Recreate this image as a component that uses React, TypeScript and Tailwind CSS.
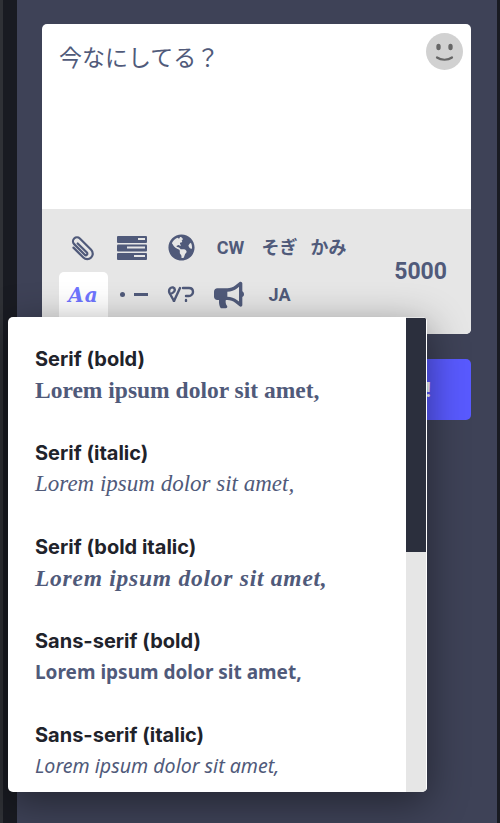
import { FaGlobeAmericas, FaBullhorn } from 'react-icons/fa';

const sans = "font-['Inter','Noto_Sans_CJK_JP',sans-serif]";
const toolText = "font-['Roboto','Noto_Sans_CJK_JP',sans-serif] text-[18px]";

const fontOptions = [
  { title: 'Serif (bold)', sample: "font-['Liberation_Serif',serif] font-bold text-[23.5px]" },
  { title: 'Serif (italic)', sample: "font-['Liberation_Serif',serif] italic text-[23px]" },
  { title: 'Serif (bold italic)', sample: "font-['Liberation_Serif',serif] font-bold italic text-[23.5px] tracking-[0.75px]" },
  { title: 'Sans-serif (bold)', sample: "font-['Noto_Sans',sans-serif] font-bold text-[19px]" },
  { title: 'Sans-serif (italic)', sample: "font-['Noto_Sans',sans-serif] italic text-[19.6px]" },
];

function ClipIcon() {
  return (
    <svg className="-ml-[2px]" width="28" height="28" viewBox="0 0 28 28" fill="none" stroke="#505a7a" strokeWidth="2.2" strokeLinecap="round">
      <g transform="rotate(-45 14 14) translate(6.5 -1)">
        <path d="M1 8v14a5.5 5.5 0 0 0 11 0V6a4 4 0 0 0-8 0v15a1.5 1.5 0 0 0 3 0V8" />
      </g>
    </svg>
  );
}

function PollIcon() {
  return (
    <svg className="-ml-[2px]" width="30" height="24" viewBox="0 0 30 24">
      <rect x="0" y="0" width="30" height="7" rx="1" fill="#505a7a" />
      <rect x="0" y="8.5" width="30" height="7" rx="1" fill="#505a7a" />
      <rect x="0" y="17" width="30" height="7" rx="1" fill="#505a7a" />
      <rect x="21" y="2" width="7" height="2" fill="#e6e6e6" />
      <rect x="10" y="10.5" width="18" height="2" fill="#e6e6e6" />
      <rect x="17" y="19" width="11" height="2" fill="#e6e6e6" />
    </svg>
  );
}

function SmileIcon() {
  return (
    <svg width="37" height="37" viewBox="0 0 37 37">
      <circle cx="18.5" cy="18.5" r="18.5" fill="#d1d1d1" />
      <ellipse cx="12.5" cy="14" rx="2.2" ry="3.2" fill="#666" />
      <ellipse cx="24.5" cy="14" rx="2.2" ry="3.2" fill="#666" />
      <path d="M11 24.5c4 3 11 3 15 0" fill="none" stroke="#666" strokeWidth="2.2" strokeLinecap="round" />
    </svg>
  );
}

function QuoteMarkIcon() {
  return (
    <svg className="-mt-[2px]" width="29" height="16" viewBox="0 0 29 16" fill="none" stroke="#505a7a" strokeWidth="2.4" strokeLinecap="round" strokeLinejoin="round">
      <path d="M7 15 2.5 7C1 3 4 1 6 1.500c2.500.6 2.500 4-.5 5.500L3 8" />
      <path d="M7 15 13 2" />
      <path d="M16 2h6c3 0 4 2 4 4s-2 4-4 4h-3" />
      <path d="M19 14v1" />
    </svg>
  );
}

function ToolButton({ children, active }: { children: React.ReactNode; active?: boolean }) {
  return (
    <div className={`flex h-[45px] w-[49px] items-center justify-center rounded-t-[5px] ${active ? 'bg-white' : ''}`}>
      {children}
    </div>
  );
}

export default function App() {
  return (
    <div className={`relative flex h-[823px] w-[500px] overflow-hidden bg-[#3e4257] ${sans}`}>
      <div className="h-full w-[17px] shrink-0 border-l-[3px] border-[#2f3136] bg-[#191b22]" />

      <div className="flex-1 pl-[25px] pr-[26px] pt-[24px]">
        {/* Composer */}
        <div className="h-[310px] overflow-hidden rounded-[5px] bg-white">
          <div className="relative h-[185px]">
            <div className="pl-[17px] pt-[16px] text-[23px] leading-[32px] text-[#505a7a] font-['Noto_Sans_CJK_JP',sans-serif]">今なにしてる？</div>
            <div className="absolute right-[8px] top-[9px]">
              <SmileIcon />
            </div>
          </div>
          <div className="flex h-[125px] items-start justify-between bg-[#e6e6e6] pl-[17px] pr-[24px] pt-[16px] font-bold text-[#505a7a]">
            <div className="flex w-[300px] flex-wrap gap-y-[2px]">
              <ToolButton><ClipIcon /></ToolButton>
              <ToolButton><PollIcon /></ToolButton>
              <ToolButton><FaGlobeAmericas className="text-[27px]" color="#505a7a" /></ToolButton>
              <ToolButton><span className={toolText}>CW</span></ToolButton>
              <ToolButton><span className={toolText}>そぎ</span></ToolButton>
              <ToolButton><span className={toolText}>かみ</span></ToolButton>
              <ToolButton active>
                <span className="font-['DejaVu_Serif',serif] text-[20px] font-bold italic tracking-[1px] text-[#6f75ff]">Aa</span>
              </ToolButton>
              <ToolButton>
                <span className="ml-[3px] flex items-center gap-[9px]">
                  <span className="h-[5px] w-[5px] rounded-full bg-[#505a7a]" />
                  <span className="h-[3px] w-[14px] bg-[#505a7a]" />
                </span>
              </ToolButton>
              <ToolButton><QuoteMarkIcon /></ToolButton>
              <ToolButton><FaBullhorn className="-ml-[3px] text-[30px]" color="#505a7a" /></ToolButton>
              <ToolButton><span className={toolText}>JA</span></ToolButton>
            </div>
            <div className="mt-[31px] font-['Roboto',sans-serif] text-[23px] leading-[32px]">5000</div>
          </div>
        </div>

        <button className="mt-[25px] flex h-[61px] w-full items-center justify-end rounded-[5px] bg-[#595aff] pr-[40px] font-['Roboto',sans-serif] text-[20px] font-bold text-white">
          トゥート!
        </button>
      </div>

      <div className="h-full w-[3px] shrink-0 bg-[#191b22]" />

      {/* Font picker dropdown */}
      <div className="absolute left-[8px] top-[317px] flex h-[475px] w-[419px] overflow-hidden rounded-[5px] bg-white shadow-[0_10px_40px_rgba(0,0,0,0.45)]">
        <div className="flex-1 overflow-hidden pl-[27px] pt-[27px]">
          {fontOptions.map((option) => (
            <div key={option.title} className="h-[94px]">
              <div className="text-[20px] font-bold leading-[30px] text-[#1f232b]">{option.title}</div>
              <div className={`leading-[32px] text-[#505a7a] ${option.sample}`}>Lorem ipsum dolor sit amet,</div>
            </div>
          ))}
        </div>
        <div className="w-[21px] border-r border-white bg-[#e6e6e6] pt-px">
          <div className="h-[234px] bg-[#2b2f3d]" />
        </div>
      </div>
    </div>
  );
}
